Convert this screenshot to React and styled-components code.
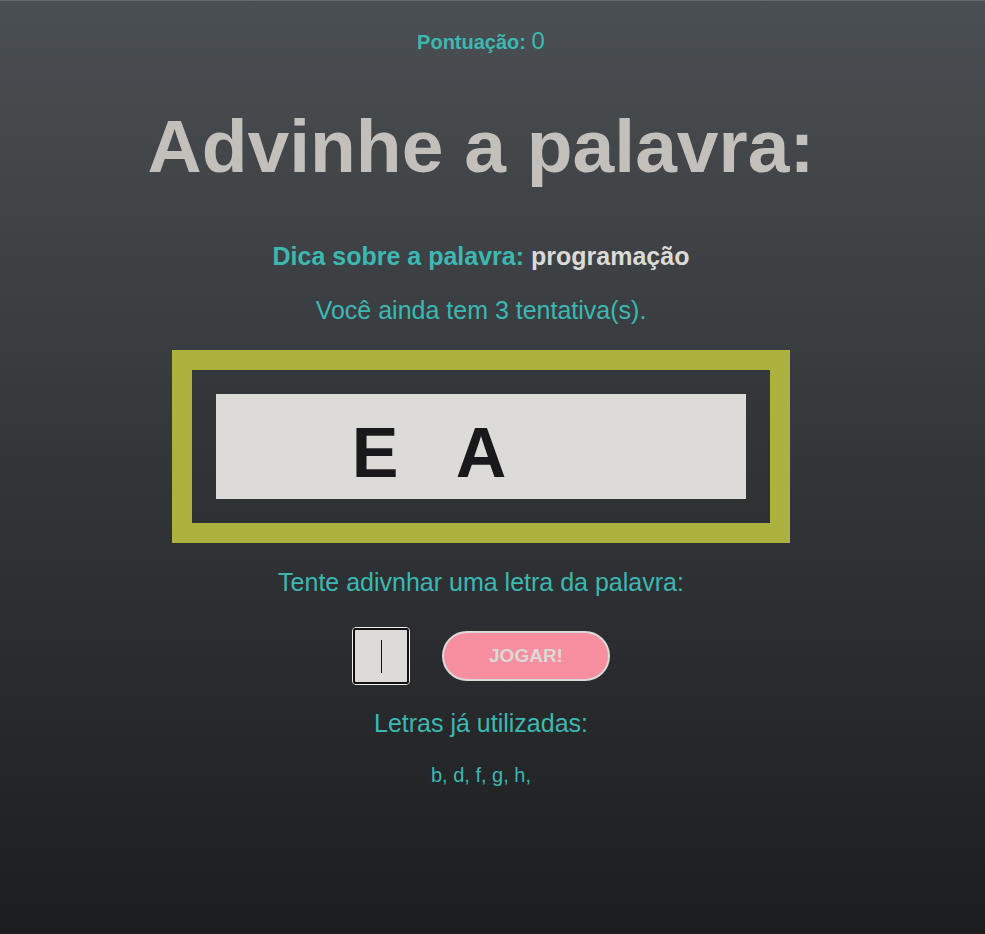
import React from "react";
import styled, { createGlobalStyle } from "styled-components";

const GlobalStyle = createGlobalStyle`
  html, body {
    margin: 0;
    padding: 0;
  }
  body {
    font-family: "Liberation Sans", Arial, sans-serif;
    background: #1d1e20;
  }
`;

const slots = ["", "E", "A", "", ""];
const usedLetters = ["b", "d", "f", "g", "h"];

function App() {
  return (
    <Page>
      <GlobalStyle />
      <Container>
        <Score>
          Pontuação: <span>0</span>
        </Score>
        <Title>Advinhe a palavra:</Title>
        <Hint>
          Dica sobre a palavra: <span>programação</span>
        </Hint>
        <Attempts>Você ainda tem 3 tentativa(s).</Attempts>
        <Board>
          <WordBox>
            {slots.map((letter, i) => (
              <Slot key={i}>{letter}</Slot>
            ))}
          </WordBox>
        </Board>
        <Prompt>Tente adivnhar uma letra da palavra:</Prompt>
        <GuessRow>
          <InputWrap>
            <LetterInput type="text" maxLength={1} aria-label="letra" />
            <Caret />
          </InputWrap>
          <PlayButton>JOGAR!</PlayButton>
        </GuessRow>
        <UsedTitle>Letras já utilizadas:</UsedTitle>
        <UsedList>
          {usedLetters.map((l) => `${l}, `).join("")}
        </UsedList>
      </Container>
    </Page>
  );
}

const Page = styled.div`
  min-height: 100vh;
  box-sizing: border-box;
  border-top: 1px solid #63676a;
  background: linear-gradient(180deg, #4a4f53 0%, #1c1d1f 100%);
  overflow: hidden;
`;

const Container = styled.main`
  width: 962px;
  display: flex;
  flex-direction: column;
  align-items: center;
  text-align: center;
  color: #3cb8b2;
`;

const Score = styled.h3`
  margin: 28px 0 0;
  font-size: 20px;
  font-weight: bold;
  line-height: 24px;
  span {
    font-size: 24px;
    font-weight: normal;
  }
`;

const Title = styled.h1`
  margin: 55px 0 0;
  font-size: 75px;
  line-height: 75px;
  font-weight: bold;
  color: #c3bfba;
`;

const Hint = styled.h3`
  margin: 57px 0 0;
  font-size: 25px;
  line-height: 30px;
  font-weight: bold;
  span {
    color: #dcdad6;
  }
`;

const Attempts = styled.p`
  margin: 24px 0 0;
  font-size: 25px;
  line-height: 30px;
`;

const Board = styled.div`
  margin-top: 25px;
  border: 20px solid #adb23e;
  background: linear-gradient(180deg, #35383b 0%, #2e3134 100%);
  padding: 24px;
`;

const WordBox = styled.div`
  display: flex;
  width: 530px;
  height: 105px;
  background: #dcdbd7;
`;

const Slot = styled.span`
  width: 106px;
  font-size: 70px;
  font-weight: bold;
  line-height: 119px;
  color: #19191b;
`;

const Prompt = styled.p`
  margin: 24px 0 0;
  font-size: 25px;
  line-height: 30px;
`;

const GuessRow = styled.div`
  margin-top: 30px;
  display: flex;
  align-items: center;
  gap: 32px;
`;

const InputWrap = styled.div`
  position: relative;
  width: 58px;
  height: 58px;
  box-sizing: border-box;
  border: 1px solid #f0f0f0;
  border-radius: 4px;
`;

const LetterInput = styled.input`
  width: 100%;
  height: 100%;
  box-sizing: border-box;
  margin: 0;
  border: 2px solid #111;
  border-radius: 3px;
  background: #dcdbd7;
  font-size: 30px;
  text-align: center;
  outline: none;
  caret-color: transparent;
`;

const Caret = styled.span`
  position: absolute;
  left: 28px;
  top: 12px;
  width: 1px;
  height: 33px;
  background: #111;
  pointer-events: none;
`;

const PlayButton = styled.button`
  width: 168px;
  height: 50px;
  border: 2px solid #dcdad6;
  border-radius: 25px;
  background: #f78fa0;
  color: #dcdad6;
  font-family: "Liberation Sans", Arial, sans-serif;
  font-size: 19px;
  font-weight: bold;
  cursor: pointer;
`;

const UsedTitle = styled.p`
  margin: 23px 0 0;
  font-size: 25px;
  line-height: 30px;
`;

const UsedList = styled.p`
  margin: 25px 0 0;
  font-size: 20px;
  line-height: 24px;
`;

export default App;
